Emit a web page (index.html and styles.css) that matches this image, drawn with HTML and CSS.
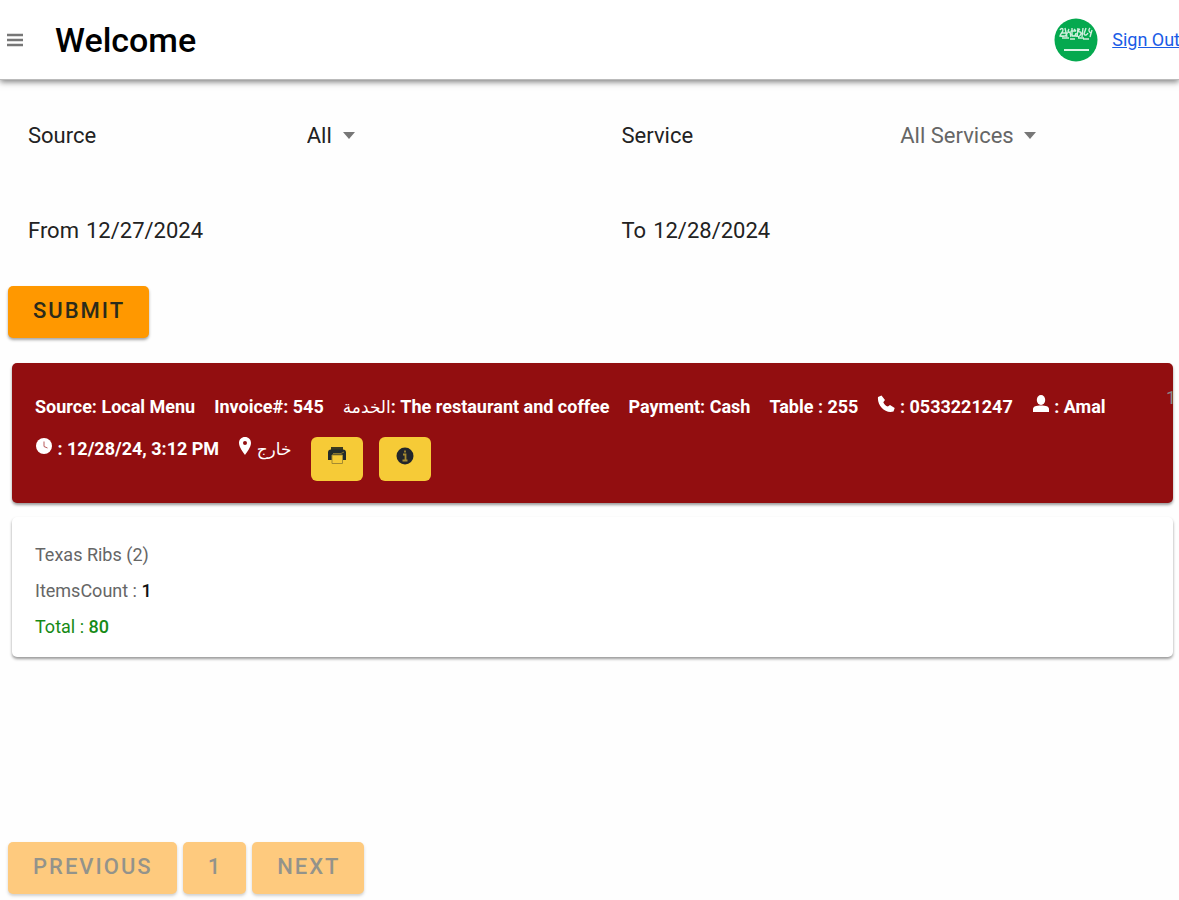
FILE: index.html
```html
<!DOCTYPE html>
<html lang="en">

<head>
    <meta charset="UTF-8">
    <meta name="viewport" content="width=device-width, initial-scale=1.0">
    <title>Welcome</title>
    <link rel="stylesheet" href="styles.css">
</head>

<body>
    <header class="toolbar">
        <button class="menuButton" type="button" aria-label="Menu">
            <svg width="18" height="16" viewBox="0 0 18 16"><path d="M1 3h16M1 8h16M1 13h16" stroke="#777" stroke-width="2.400"/></svg>
        </button>
        <h1>Welcome</h1>
        <button class="flagButton" type="button" aria-label="العربية">
            <svg width="44" height="44" viewBox="0 0 44 44">
                <circle cx="22" cy="22" r="21.5" fill="#05a94f"/>
                <g fill="none" stroke="#fff" stroke-width="1.4" opacity=".8">
                    <path d="M6 12c1-2 3-2 3 0s-2 3-3 6c3 1 6 0 7-2M11 10l2 9M15 11c-2 3 0 4 1 3l1 5M18 10v7c2 2 4 0 4-2M20 11l2 2M24 10l-1 9M26 11c-2 1-2 3 0 3s1 4-2 5M29 10l-1 9M32 10l-2 6c1 2 3 1 4-1M36 10c-2 2-1 4 1 5M38 12l-2 7M8 20h7M16 21h5M24 20h6M8 15h6M17 13h5M7 18h5M18 18h6M29 21h6"/>
                </g>
                <path d="M10 32h25" stroke="#d9f5e5" stroke-width="2"/>
            </svg>
        </button>
        <a class="signOut" href="#">Sign Out</a>
    </header>

    <main class="content">
        <form class="filters">
            <div class="field">
                <label for="source">Source</label>
                <span class="selectBox">
                    <select id="source"><option>All</option></select>
                </span>
            </div>
            <div class="field">
                <label for="service">Service</label>
                <span class="selectBox muted">
                    <select id="service"><option>All Services</option></select>
                </span>
            </div>
            <div class="dateField">
                <label for="from">From</label>
                <input id="from" type="text" value="12/27/2024">
            </div>
            <div class="dateField">
                <label for="to">To</label>
                <input id="to" type="text" value="12/28/2024">
            </div>
            <button class="btn" type="submit">SUBMIT</button>
        </form>

        <!-- Order header -->
        <section class="card order">
            <span>Source: Local Menu</span>
            <span>Invoice#: 545</span>
            <span><span class="arabic">الخدمة</span>: The restaurant and coffee</span>
            <span>Payment: Cash</span>
            <span>Table : 255</span>
            <span>
                <svg class="icon" viewBox="0 0 18 18"><path d="M1 2 4.500.500 8 5 6.300 7.200c1 2.400 2.400 3.500 4.600 4.300L13 10l4.700 3-1.200 3.500C8 19 0 10 1 2z"/></svg>
                : 0533221247
            </span>
            <span>
                <svg class="icon" viewBox="0 0 18 18"><ellipse cx="9" cy="5" rx="4.200" ry="5"/><path d="M1 17v-3c0-2.500 3-3.500 8-3.500s8 1 8 3.500v3z"/></svg>
                : Amal
            </span>
            <span>
                <svg class="icon" viewBox="0 0 18 18"><circle cx="9" cy="9" r="8"/><path d="M9 4.500v5l3.500 1.500" fill="none" stroke="#b85a5b" stroke-width="1"/></svg>
                : 12/28/24, 3:12 PM
            </span>
            <span>
                <svg class="icon pin" viewBox="0 0 14 18"><path fill-rule="evenodd" d="M7 0C3.500 0 1 2.500 1 6c0 4 4 9 6 12 2-3 6-8 6-12 0-3.500-2.500-6-6-6zm0 4a2 2 0 1 1 0 4 2 2 0 0 1 0-4z"/></svg>
                <span class="arabic">خارج</span>
            </span>
            <span class="actions">
                <button class="iconButton" type="button" aria-label="Print">
                    <svg width="18" height="18" viewBox="0 0 18 18"><path d="M3 0h12v3H3z" fill="#3c3b1f"/><path d="M3 2.500h12c2 0 3 1 3 3V13h-3V8H4v5H0V5.500c0-2 1-3 3-3z" fill="#222b2b"/><path d="M4 8h10.500v8.500H4z" fill="none" stroke="#a58b31"/><path d="M5 6.500h8l3-1.500" fill="none" stroke="#8a762c"/></svg>
                </button>
                <button class="iconButton" type="button" aria-label="Details">
                    <svg width="18" height="18" viewBox="0 0 18 18"><circle cx="9" cy="9" r="8.500" fill="#22262b"/><path d="M9 3.500v2M7 7.500h2.500V13M6.500 13.500h5" fill="none" stroke="#a58b31" stroke-width="1.800"/></svg>
                </button>
            </span>
            <span class="counter">1</span>
        </section>

        <!-- Order items -->
        <section class="card items">
            <p>Texas Ribs (2)</p>
            <p>ItemsCount : <b>1</b></p>
            <p class="total">Total : <b>80</b></p>
        </section>
    </main>

    <nav class="pager">
        <button class="btn" type="button" disabled>PREVIOUS</button>
        <button class="btn" type="button" disabled>1</button>
        <button class="btn" type="button" disabled>NEXT</button>
    </nav>
</body>

</html>
```
FILE: styles.css
```css
* {
    box-sizing: border-box;
}

body {
    margin: 0;
    min-height: 100vh;
    display: flex;
    flex-direction: column;
    background-color: #fefefe;
    color: #222;
    font-family: Roboto, "DejaVu Sans", sans-serif;
    font-size: 22px;
    overflow-x: hidden;
}

button, select, input {
    font: inherit;
    color: inherit;
    border: 0;
    background: none;
    padding: 0;
    margin: 0;
}

/* Toolbar */
.toolbar {
    display: flex;
    align-items: center;
    height: 80px;
    padding-left: 6px;
    overflow: hidden;
    background-color: #fff;
    border-bottom: 1px solid #bbb;
    box-shadow: 0 2px 6px rgba(0, 0, 0, 0.5);
    clip-path: inset(0 0 -14px 0);
}

.menuButton, .flagButton {
    display: flex;
}

.toolbar h1 {
    flex: 1;
    margin: 0 0 0 31px;
    font-size: 34px;
    font-weight: 500;
    color: #000;
}

.signOut {
    margin: 0 -1px 0 14px;
    font-size: 18px;
    white-space: nowrap;
    color: #1a5ce6;
}

/* Filters */
.filters {
    display: grid;
    grid-template-columns: 1fr 1fr;
    column-gap: 36px;
    padding-left: 28px;
}

.field {
    display: grid;
    grid-template-columns: 1fr 1fr;
    align-items: center;
    height: 110px;
}

.dateField {
    display: flex;
    align-items: center;
    gap: 7px;
    height: 80px;
}

.dateField input {
    width: 140px;
}

.selectBox {
    display: flex;
    align-items: center;
    gap: 10px;
}

.selectBox select {
    appearance: none;
}

.selectBox::after {
    content: "";
    border: 6px solid transparent;
    border-top: 7px solid #777;
    border-bottom: 0;
}

.muted {
    color: #666;
}

.btn {
    height: 52px;
    padding: 0 24px 4px 25px;
    border-radius: 5px;
    background-color: #ff9800;
    color: #2b2b1b;
    font-weight: 500;
    letter-spacing: 2px;
    box-shadow: 0 2px 3px rgba(0, 0, 0, 0.35);
}

.filters .btn {
    justify-self: start;
    margin: 16px 0 0 -20px;
}

.btn:disabled {
    opacity: 0.5;
}

/* Cards */
.card {
    position: relative;
    margin: 0 6px 14px 12px;
    padding: 23px 22px 12px 23px;
    border-radius: 5px;
    box-shadow: 0 2px 3px rgba(0, 0, 0, 0.4);
}

.order {
    display: flex;
    flex-wrap: wrap;
    align-content: flex-start;
    column-gap: 19px;
    min-height: 140px;
    margin-top: 25px;
    padding-right: 60px;
    overflow: hidden;
    background-color: #920e10;
    color: #fff;
    font-size: 18px;
    font-weight: 700;
    line-height: 42px;
}

.arabic {
    font-size: 17px;
    font-weight: 400;
}

.icon {
    width: 18px;
    height: 18px;
    fill: #fff;
}

.pin {
    width: 14px;
}

.actions {
    display: flex;
    gap: 16px;
    padding-top: 9px;
}

.iconButton {
    display: flex;
    justify-content: center;
    width: 52px;
    height: 44px;
    padding-top: 10px;
    border-radius: 6px;
    background-color: #f6cb37;
}

/* Sits over the card edge and is cut by it */
.counter {
    position: absolute;
    top: 14px;
    right: -3px;
    font-weight: 400;
    color: #888;
}

.items {
    min-height: 140px;
    background-color: #fff;
    color: #666;
    font-size: 18px;
    line-height: 30px;
}

.items p {
    margin: 0 0 6px;
}

.items p:last-child {
    margin-bottom: 0;
}

.items b {
    font-weight: 500;
    color: #111;
}

.items .total, .items .total b {
    color: #168a16;
}

/* Pager */
.pager {
    display: flex;
    gap: 6px;
    margin-top: auto;
    padding: 0 8px 6px;
}
```
